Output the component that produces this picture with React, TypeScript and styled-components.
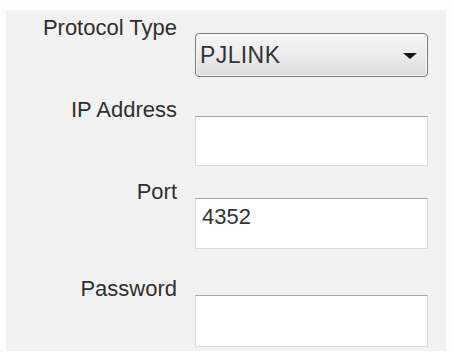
import React from 'react';
import styled, { createGlobalStyle } from 'styled-components';

const GlobalStyle = createGlobalStyle`
  body {
    margin: 0;
    background: #fdfdfd;
    font-family: 'Liberation Sans', Arial, sans-serif;
  }
`;

const Panel = styled.div`
  box-sizing: border-box;
  width: 440px;
  height: 341px;
  margin: 10px 0 0 6px;
  padding-top: 6px;
  background: #f2f2f2;
`;

const Row = styled.div<{ $top: number }>`
  display: grid;
  grid-template-columns: 171px 233px;
  column-gap: 18px;
  margin-top: ${(p) => p.$top}px;
`;

const Label = styled.div`
  text-align: right;
  font-size: 22px;
  line-height: 24px;
  color: #2f2f2f;
  white-space: nowrap;
`;

const Select = styled.div`
  box-sizing: border-box;
  display: flex;
  align-items: center;
  justify-content: space-between;
  height: 44px;
  margin-top: 17px;
  padding: 0 10px 0 4px;
  border: 1px solid #7a7a7a;
  border-radius: 4px;
  background: linear-gradient(#f6f6f6, #ececec 50%, #dcdcdc);
  box-shadow: inset 0 0 0 1px #fafafa;
  font-size: 23px;
  letter-spacing: 0.4px;
  color: #333;
`;

const Arrow = styled.span`
  width: 0;
  height: 0;
  margin-top: 2px;
  border-left: 7px solid transparent;
  border-right: 7px solid transparent;
  border-top: 6px solid #151515;
`;

const Field = styled.div<{ $h: number }>`
  box-sizing: border-box;
  height: ${(p) => p.$h}px;
  margin-top: 18px;
  padding: 5px 6px 0;
  background: #fff;
  border: 1px solid #dadada;
  border-top-color: #a3a3a3;
  font-size: 22px;
  line-height: 26px;
  color: #333;
`;

export default function App() {
  return (
    <>
      <GlobalStyle />
      <Panel>
        <Row $top={0}>
          <Label>Protocol Type</Label>
          <Select>
            PJLINK
            <Arrow />
          </Select>
        </Row>
        <Row $top={21}>
          <Label>IP Address</Label>
          <Field $h={50} />
        </Row>
        <Row $top={14}>
          <Label>Port</Label>
          <Field $h={51}>4352</Field>
        </Row>
        <Row $top={28}>
          <Label>Password</Label>
          <Field $h={52} />
        </Row>
      </Panel>
    </>
  );
}
